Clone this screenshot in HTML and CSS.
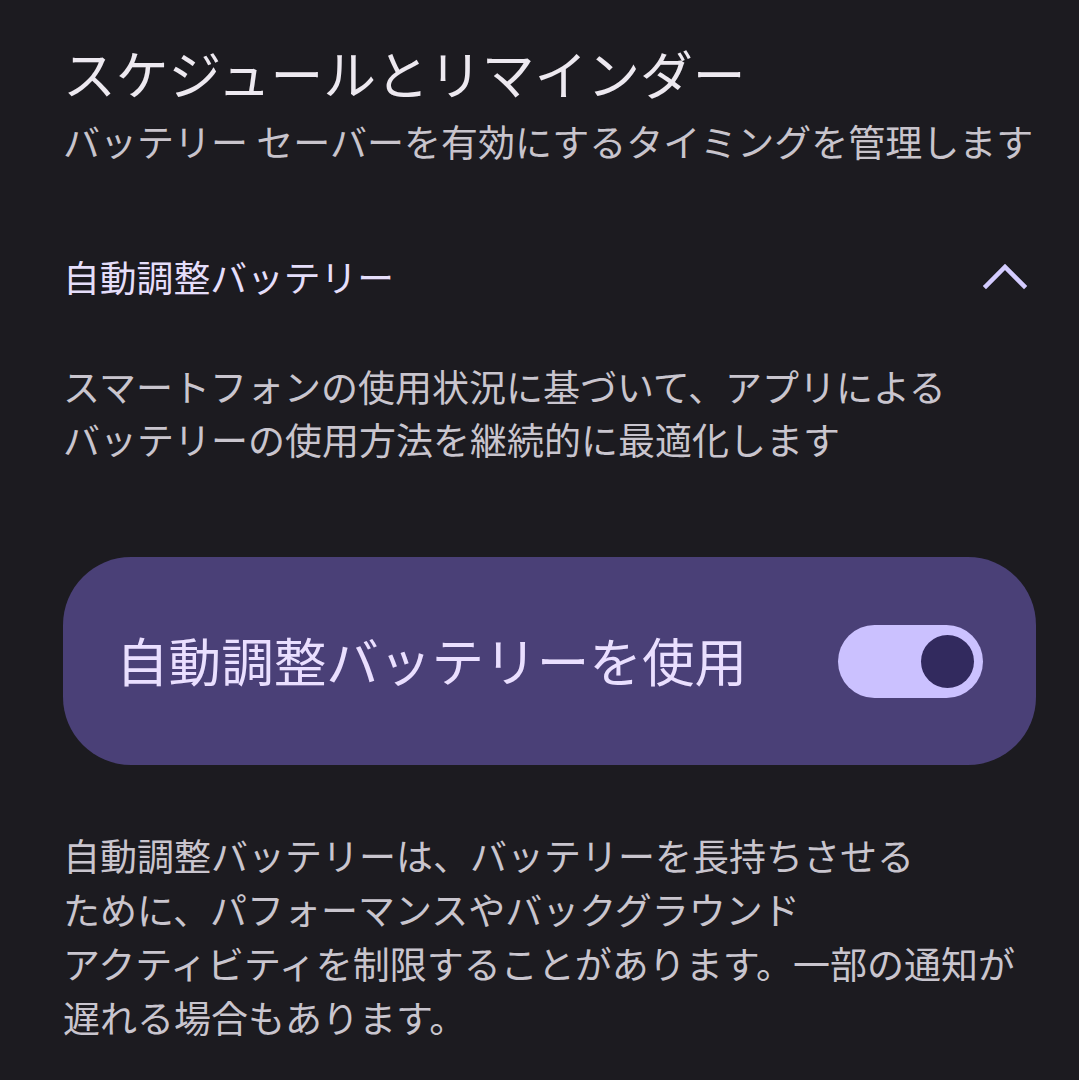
FILE: index.html
```html
<!DOCTYPE html>
<html lang="ja">
<head>
    <meta charset="utf-8">
    <title>スケジュールとリマインダー</title>
    <link rel="stylesheet" href="styles.css">
</head>
<body>
    <div class="page">
        <h1 class="title">スケジュールとリマインダー</h1>
        <p class="subtitle">バッテリー セーバーを有効にするタイミングを管理します</p>

        <div class="section-row">
            <span class="section-name">自動調整バッテリー</span>
            <svg class="chevron" width="44" height="28" viewBox="0 0 44 28">
                <path d="M3 24 L22 5 L41 24" fill="none" stroke="#d4ccff" stroke-width="4.5" stroke-linecap="square"/>
            </svg>
        </div>

        <p class="body-text">スマートフォンの使用状況に基づいて、アプリによる<br>バッテリーの使用方法を継続的に最適化します</p>

        <div class="switch-card">
            <span class="switch-label">自動調整バッテリーを使用</span>
            <div class="toggle on">
                <div class="thumb"></div>
            </div>
        </div>

        <p class="body-text note">自動調整バッテリーは、バッテリーを長持ちさせる<br>ために、パフォーマンスやバックグラウンド<br>アクティビティを制限することがあります。一部の通知が<br>遅れる場合もあります。</p>
    </div>
</body>
</html>
```

FILE: styles.css
```css
body {
    margin: 0;
    background: #1c1b20;
    font-family: "Noto Sans CJK JP", "Noto Sans", sans-serif;
}

.page {
    padding: 40px 43px 0 63px;
}

.title {
    margin: 0;
    font-size: 52.8px;
    font-weight: 400;
    line-height: 64px;
    color: #ede9f0;
}

.subtitle {
    margin: 11px 0 0;
    font-size: 37px;
    line-height: 52px;
    color: #c8c4cc;
}

.section-row {
    display: flex;
    align-items: center;
    justify-content: space-between;
    margin-top: 83px;
    height: 52px;
}

.section-name {
    font-size: 36.8px;
    color: #e5defa;
}

.chevron {
    margin-right: 9px;
}

.body-text {
    margin: 58px 0 0;
    font-size: 37px;
    line-height: 53px;
    color: #c9c5ce;
}

.switch-card {
    display: flex;
    align-items: center;
    justify-content: space-between;
    margin: 91px 0 0;
    height: 208px;
    padding: 0 53px 0 53px;
    background: #4a4077;
    border-radius: 68px;
}

.switch-label {
    font-size: 52.6px;
    line-height: 64px;
    margin-top: -4px;
    color: #eadfff;
}

.toggle {
    position: relative;
    width: 145px;
    height: 73px;
    border-radius: 37px;
    background: #cbc1ff;
}

.toggle .thumb {
    position: absolute;
    top: 10px;
    right: 9px;
    width: 53px;
    height: 53px;
    border-radius: 50%;
    background: #322a5e;
}

.note {
    margin-top: 63px;
    line-height: 54px;
}
```
